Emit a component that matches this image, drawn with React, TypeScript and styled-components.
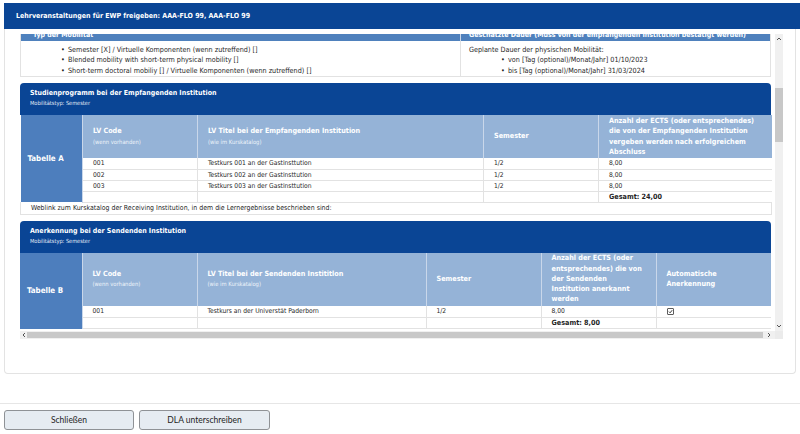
import * as React from "react";
import { createGlobalStyle, styled } from "styled-components";

const GlobalStyle = createGlobalStyle`
  html, body {
    margin: 0;
    background: #fff;
  }
  body {
    font-family: "DejaVu Sans Condensed", "DejaVu Sans", sans-serif;
    color: #1f1f1f;
  }
  * {
    box-sizing: border-box;
  }
`;

const Top = styled.div`
  padding: 3px 0 0 4px;
`;

const TitleBar = styled.div`
  height: 26px;
  background: #0a4595;
  color: #fff;
  font-weight: bold;
  font-size: 7px;
  display: flex;
  align-items: center;
  padding-left: 12px;
`;

const Panel = styled.div`
  margin-right: 4px;
  height: 345px;
  border: 1px solid #e3e3e3;
  border-top: none;
  border-radius: 0 0 4px 4px;
  padding: 5px 12px 0 15px;
`;

const ScrollFrame = styled.div`
  display: grid;
  grid-template-columns: 755px 8px;
  grid-template-rows: 297px 8px;
`;

const Viewport = styled.div`
  overflow: hidden;
`;

const Content = styled.div<{ $scroll: number }>`
  width: 751px;
  margin-top: ${(p) => -p.$scroll}px;
  display: flex;
  flex-direction: column;
  gap: 6px;
`;

/* Typ der Mobilität */

const TypeTable = styled.div`
  display: grid;
  grid-template-columns: 439px 1fr;
  border-left: 1px solid #e2e2e2;
  border-right: 1px solid #e2e2e2;
  border-bottom: 1px solid #e2e2e2;
`;

const TypeHead = styled.div<{ $pad: number; $divider?: boolean }>`
  height: 15px;
  background: #4f81bd;
  color: #fff;
  font-weight: bold;
  font-size: 7px;
  line-height: 9px;
  display: flex;
  align-items: flex-end;
  padding: 0 0 1px ${(p) => p.$pad}px;
  white-space: nowrap;
  overflow: hidden;
  border-left: ${(p) => (p.$divider ? "1px solid #c9d7ea" : "none")};
`;

const TypeBody = styled.div<{ $pad: number; $divider?: boolean }>`
  font-size: 7.2px;
  line-height: 10.5px;
  padding: 3.5px 0 0 ${(p) => p.$pad}px;
  border-left: ${(p) => (p.$divider ? "1px solid #e2e2e2" : "none")};
`;

const Bullets = styled.ul<{ $indent: number }>`
  list-style: none;
  margin: 0;
  padding-left: ${(p) => p.$indent}px;
`;

const Bullet = styled.li`
  &::before {
    content: "•";
    display: inline-block;
    width: 7px;
  }
`;

/* Sections */

const SectionHead = styled.div`
  height: 32px;
  background: #0a4595;
  border-radius: 4px 4px 0 0;
  color: #fff;
  padding: 4px 10px 0;
`;

const SectionTitle = styled.div`
  font-weight: bold;
  font-size: 7px;
  line-height: 12px;
`;

const SectionSub = styled.div`
  font-size: 5.6px;
  line-height: 9px;
  color: #e4ebf6;
`;

const Table = styled.table`
  width: 751px;
  table-layout: fixed;
  border-collapse: collapse;
`;

const LabelCell = styled.th`
  background: #4d7ebd;
  color: #fff;
  font-size: 7.9px;
  font-weight: bold;
  text-align: left;
  vertical-align: middle;
  padding: 0 0 0 7px;
  border-right: 1px solid #c9d7ea;
`;

const HeadCell = styled.th<{ $h: number }>`
  height: ${(p) => p.$h}px;
  background: #95b3d7;
  color: #fff;
  font-size: 7.2px;
  line-height: 10.3px;
  font-weight: bold;
  text-align: left;
  white-space: nowrap;
  vertical-align: middle;
  padding: 0 10px;
  border-left: 1px solid #c9d7ea;
`;

const HeadNote = styled.div`
  font-size: 5.8px;
  font-weight: normal;
  color: #eef3fa;
  line-height: 10px;
`;

const Cell = styled.td<{ $h?: number; $bold?: boolean }>`
  height: ${(p) => p.$h ?? 11}px;
  font-size: ${(p) => (p.$bold ? 7.2 : 6.7)}px;
  font-weight: ${(p) => (p.$bold ? "bold" : "normal")};
  line-height: 10px;
  padding: 0 10px;
  white-space: nowrap;
  border-left: 1px solid #e2e2e2;
  border-bottom: 1px solid #e2e2e2;
  vertical-align: middle;
`;

const WeblinkCell = styled.td`
  height: 12px;
  font-size: 6.95px;
  padding: 0 10px;
  border-left: 1px solid #e2e2e2;
  border-right: 1px solid #e2e2e2;
  border-bottom: 1px solid #e2e2e2;
`;

/* Scrollbars */

const VScroll = styled.div`
  background: #f0f0f0;
  display: flex;
  flex-direction: column;
  align-items: center;
`;

const Arrow = styled.div<{ $size: number }>`
  flex: 0 0 ${(p) => p.$size}px;
  display: flex;
  align-items: center;
  justify-content: center;
`;

const VThumb = styled.div`
  width: 8px;
  height: 54px;
  margin-top: 44px;
  background: #c8c8c8;
`;

const Spacer = styled.div`
  flex: 1;
`;

const HScroll = styled.div`
  grid-column: 1 / span 2;
  display: flex;
  background: #f0f0f0;
`;

const HThumb = styled.div`
  flex: 1;
  background: #c8c8c8;
  margin: 1px 0;
`;

const Corner = styled.div`
  flex: 0 0 8px;
  background: #ebebeb;
`;

/* Footer */

const Footer = styled.div`
  margin-top: 29px;
  border-top: 1px solid #e6e6e6;
  padding: 6px 5px 0 4px;
  display: flex;
  gap: 5px;
`;

const Button = styled.button<{ $w: number }>`
  width: ${(p) => p.$w}px;
  height: 20px;
  border: 1px solid #8f9296;
  border-radius: 3px;
  background: #e6ecf2;
  color: #1e1e1e;
  font-family: Lato, "Open Sans", sans-serif;
  font-size: 8.5px;
  padding: 0;
`;

function Chevron({ dir }: { dir: "up" | "down" | "left" | "right" }) {
  const pts = {
    up: "1,4 3,2 5,4",
    down: "1,2 3,4 5,2",
    left: "4,1 2,3 4,5",
    right: "2,1 4,3 2,5",
  }[dir];
  return (
    <svg width="6" height="6" viewBox="0 0 6 6">
      <polyline points={pts} fill="none" stroke="#555" strokeWidth="1" />
    </svg>
  );
}

function CheckBox() {
  return (
    <svg width="7" height="7" viewBox="0 0 14 14" style={{ display: "block" }}>
      <rect x="1" y="1" width="12" height="12" rx="1" fill="#fff" stroke="#333" strokeWidth="1.6" />
      <polyline
        points="3.8,7.2 6.2,9.6 10.4,4.4"
        fill="none"
        stroke="#222"
        strokeWidth="1.8"
      />
    </svg>
  );
}

function Lines({ lines }: { lines: string[] }) {
  return (
    <>
      {lines.map((l, i) => (
        <React.Fragment key={i}>
          {i > 0 && <br />}
          {l}
        </React.Fragment>
      ))}
    </>
  );
}

type Course = { code: string; title: string; semester: string; ects: string };

const coursesA: Course[] = [
  { code: "001", title: "Testkurs 001 an der Gastinsttution", semester: "1/2", ects: "8,00" },
  { code: "002", title: "Testkurs 002 an der Gastinsttution", semester: "1/2", ects: "8,00" },
  { code: "003", title: "Testkurs 003 an der Gastinsttution", semester: "1/2", ects: "8,00" },
];

function TableA() {
  return (
    <div>
      <SectionHead>
        <SectionTitle>Studienprogramm bei der Empfangenden Institution</SectionTitle>
        <SectionSub>Mobilitätstyp: Semester</SectionSub>
      </SectionHead>
      <Table>
        <colgroup>
          <col style={{ width: 62 }} />
          <col style={{ width: 115 }} />
          <col style={{ width: 286 }} />
          <col style={{ width: 115 }} />
          <col style={{ width: 173 }} />
        </colgroup>
        <tbody>
          <tr>
            <LabelCell rowSpan={5}>Tabelle A</LabelCell>
            <HeadCell $h={43}>
              LV Code
              <HeadNote>(wenn vorhanden)</HeadNote>
            </HeadCell>
            <HeadCell $h={43}>
              LV Titel bei der Empfangenden Institution
              <HeadNote>(wie im Kurskatalog)</HeadNote>
            </HeadCell>
            <HeadCell $h={43}>Semester</HeadCell>
            <HeadCell $h={43}>
              <Lines
                lines={[
                  "Anzahl der ECTS (oder entsprechendes)",
                  "die von der Empfangenden Institution",
                  "vergeben werden nach erfolgreichem",
                  "Abschluss",
                ]}
              />
            </HeadCell>
          </tr>
          {coursesA.map((c) => (
            <tr key={c.code}>
              <Cell>{c.code}</Cell>
              <Cell>{c.title}</Cell>
              <Cell>{c.semester}</Cell>
              <Cell>{c.ects}</Cell>
            </tr>
          ))}
          <tr>
            <Cell />
            <Cell />
            <Cell />
            <Cell $bold>Gesamt: 24,00</Cell>
          </tr>
          <tr>
            <WeblinkCell colSpan={5}>
              Weblink zum Kurskatalog der Receiving Institution, in dem die Lernergebnisse
              beschrieben sind:
            </WeblinkCell>
          </tr>
        </tbody>
      </Table>
    </div>
  );
}

function TableB() {
  return (
    <div>
      <SectionHead>
        <SectionTitle>Anerkennung bei der Sendenden Institution</SectionTitle>
        <SectionSub>Mobilitätstyp: Semester</SectionSub>
      </SectionHead>
      <Table>
        <colgroup>
          <col style={{ width: 62 }} />
          <col style={{ width: 115 }} />
          <col style={{ width: 229 }} />
          <col style={{ width: 115 }} />
          <col style={{ width: 115 }} />
          <col style={{ width: 115 }} />
        </colgroup>
        <tbody>
          <tr>
            <LabelCell rowSpan={3}>Tabelle B</LabelCell>
            <HeadCell $h={53}>
              LV Code
              <HeadNote>(wenn vorhanden)</HeadNote>
            </HeadCell>
            <HeadCell $h={53}>
              LV Titel bei der Sendenden Instititlon
              <HeadNote>(wie im Kurskatalog)</HeadNote>
            </HeadCell>
            <HeadCell $h={53}>Semester</HeadCell>
            <HeadCell $h={53}>
              <Lines
                lines={[
                  "Anzahl der ECTS (oder",
                  "entsprechendes) die von",
                  "der Sendenden",
                  "Institution anerkannt",
                  "werden",
                ]}
              />
            </HeadCell>
            <HeadCell $h={53}>
              <Lines lines={["Automatische", "Anerkennung"]} />
            </HeadCell>
          </tr>
          <tr>
            <Cell $h={12}>001</Cell>
            <Cell $h={12}>Testkurs an der Universtät Paderborn</Cell>
            <Cell $h={12}>1/2</Cell>
            <Cell $h={12}>8,00</Cell>
            <Cell $h={12}>
              <CheckBox />
            </Cell>
          </tr>
          <tr>
            <Cell />
            <Cell />
            <Cell />
            <Cell $bold>Gesamt: 8,00</Cell>
            <Cell />
          </tr>
        </tbody>
      </Table>
    </div>
  );
}

export default function App() {
  return (
    <>
      <GlobalStyle />
      <Top>
        <TitleBar>Lehrveranstaltungen für EWP freigeben: AAA-FLO 99, AAA-FLO 99</TitleBar>
        <Panel>
          <ScrollFrame>
            <Viewport>
              <Content $scroll={8}>
                <TypeTable>
                  <TypeHead $pad={12}>Typ der Mobilität</TypeHead>
                  <TypeHead $pad={8} $divider>
                    Geschätzte Dauer (Muss von der empfangenden Institution bestätigt werden)
                  </TypeHead>
                  <TypeBody $pad={0}>
                    <Bullets $indent={40}>
                      <Bullet>Semester [X] / Virtuelle Komponenten (wenn zutreffend) []</Bullet>
                      <Bullet>Blended mobility with short-term physical mobility []</Bullet>
                      <Bullet>
                        Short-term doctoral mobiliy [] / Virtuelle Komponenten (wenn zutreffend) []
                      </Bullet>
                    </Bullets>
                  </TypeBody>
                  <TypeBody $pad={8} $divider>
                    Geplante Dauer der physischen Mobilität:
                    <Bullets $indent={32}>
                      <Bullet>von [Tag (optional)/Monat/Jahr] 01/10/2023</Bullet>
                      <Bullet>bis [Tag (optional)/Monat/Jahr] 31/03/2024</Bullet>
                    </Bullets>
                  </TypeBody>
                </TypeTable>
                <TableA />
                <TableB />
              </Content>
            </Viewport>
            <VScroll>
              <Arrow $size={10}>
                <Chevron dir="up" />
              </Arrow>
              <VThumb />
              <Spacer />
              <Arrow $size={10}>
                <Chevron dir="down" />
              </Arrow>
            </VScroll>
            <HScroll>
              <Arrow $size={7}>
                <Chevron dir="left" />
              </Arrow>
              <HThumb />
              <Arrow $size={12}>
                <Chevron dir="right" />
              </Arrow>
              <Corner />
            </HScroll>
          </ScrollFrame>
        </Panel>
      </Top>
      <Footer>
        <Button $w={130}>Schließen</Button>
        <Button $w={131}>DLA unterschreiben</Button>
      </Footer>
    </>
  );
}
